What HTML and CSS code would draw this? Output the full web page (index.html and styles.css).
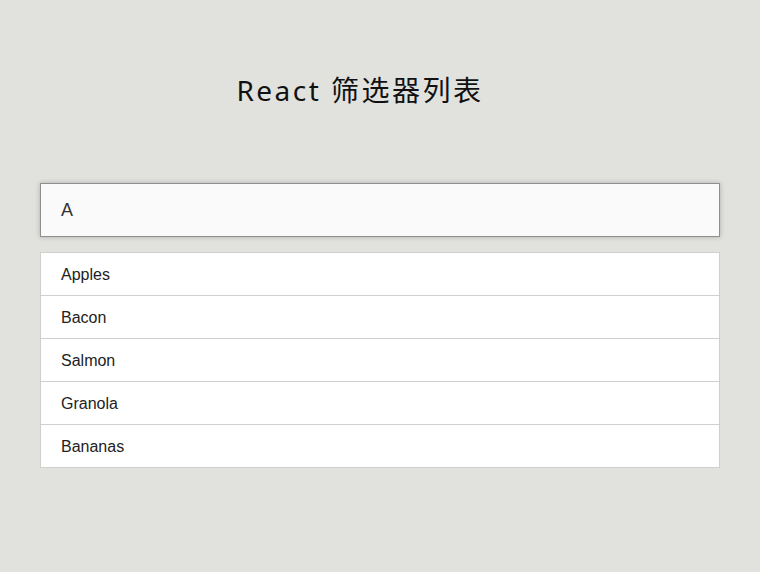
FILE: index.html
```html
<!DOCTYPE html>
<html lang="zh">
<head>
<meta charset="utf-8">
<title>React 筛选器列表</title>
<link rel="stylesheet" href="styles.css">
</head>
<body>
<div class="app">
  <h1 class="title">React 筛选器列表</h1>
  <input class="search" type="text" value="A">
  <ul class="list">
    <li class="item">Apples</li>
    <li class="item">Bacon</li>
    <li class="item">Salmon</li>
    <li class="item">Granola</li>
    <li class="item">Bananas</li>
  </ul>
</div>
</body>
</html>
```
FILE: styles.css
```css
html, body {
  margin: 0;
  padding: 0;
}
body {
  background: #e1e2de;
  font-family: "Liberation Sans", Arial, sans-serif;
  color: #222;
}
.app {
  width: 680px;
  margin: 0 auto;
  padding-top: 72px;
}
.title {
  margin: 0 40px 75px 0;
  text-align: center;
  font-family: "Noto Sans", "Noto Sans CJK SC", sans-serif;
  font-weight: 400;
  font-size: 28px;
  line-height: 36px;
  letter-spacing: 2.5px;
  color: #111;
}
.search {
  display: block;
  box-sizing: border-box;
  width: 680px;
  height: 54px;
  margin: 0;
  padding: 0 20px;
  border: 1px solid #8f8f8f;
  background: #fafafa;
  box-shadow: 0 0 5px rgba(0, 0, 0, 0.22);
  font-family: "Liberation Sans", Arial, sans-serif;
  font-size: 18px;
  color: #333;
  outline: none;
}
.list {
  list-style: none;
  margin: 15px 0 0;
  padding: 0;
  border: 1px solid #cfcfcf;
  border-bottom: none;
  background: #fff;
}
.item {
  height: 42px;
  line-height: 44px;
  overflow: hidden;
  padding: 0 20px;
  border-bottom: 1px solid #cfcfcf;
  font-size: 16px;
  color: #222;
}
```
